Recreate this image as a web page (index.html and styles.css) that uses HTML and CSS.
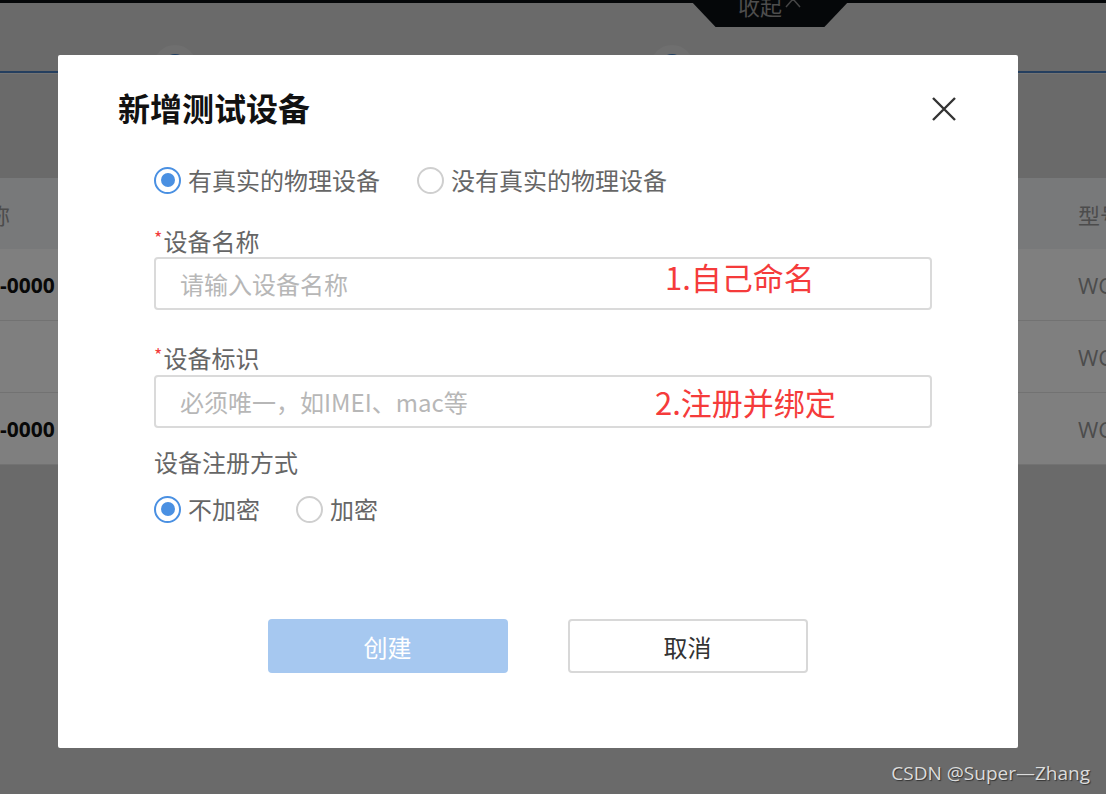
FILE: index.html
```html
<!DOCTYPE html>
<html lang="zh-CN">
<head>
<meta charset="utf-8">
<title>新增测试设备</title>
<link rel="stylesheet" href="styles.css">
</head>
<body>
<div class="page">
  <div class="topbar"></div>
  <div class="tab-wrap">
    <div class="tab"><span class="tab-text">收起</span><svg class="tab-chev" width="18" height="12" viewBox="0 0 18 12"><path d="M2 11 L9 3 L16 11" fill="none" stroke="#8a8a8a" stroke-width="1.5"/></svg></div>
  </div>
  <div class="steps">
    <div class="step-dot step-a"></div>
    <div class="step-dot step-b"></div>
  </div>
  <div class="steps-line"></div>
  <div class="table">
    <div class="trow thead"><span class="c-left c-head">称</span><span class="c-right c-gray">型号</span></div>
    <div class="trow"><span class="c-left c-bold">-0000</span><span class="c-right c-gray">WC</span></div>
    <div class="trow"><span class="c-left"></span><span class="c-right c-gray">WC</span></div>
    <div class="trow"><span class="c-left c-bold">-0000</span><span class="c-right c-gray">WC</span></div>
  </div>

  <div class="mask"></div>

  <div class="modal">
    <div class="modal-head">
      <h2 class="modal-title">新增测试设备</h2>
      <svg class="close" width="26" height="26" viewBox="0 0 26 26"><path d="M2 2 L24 24 M24 2 L2 24" stroke="#333" stroke-width="2.4" fill="none"/></svg>
    </div>
    <div class="form">
      <div class="radio-row row-type">
        <label class="radio"><span class="dot on"></span><span class="radio-text">有真实的物理设备</span></label>
        <label class="radio"><span class="dot"></span><span class="radio-text">没有真实的物理设备</span></label>
      </div>
      <div class="label lbl-1"><span class="req">*</span>设备名称</div>
      <div class="input"><span class="ph">请输入设备名称</span><span class="note note-1">1.自己命名</span></div>
      <div class="label lbl-2"><span class="req">*</span>设备标识</div>
      <div class="input"><span class="ph">必须唯一，如IMEI、mac等</span><span class="note note-2">2.注册并绑定</span></div>
      <div class="label lbl-3">设备注册方式</div>
      <div class="radio-row row-enc">
        <label class="radio"><span class="dot on"></span><span class="radio-text">不加密</span></label>
        <label class="radio"><span class="dot"></span><span class="radio-text">加密</span></label>
      </div>
    </div>
    <div class="actions">
      <button class="btn btn-primary">创建</button>
      <button class="btn btn-default">取消</button>
    </div>
  </div>

  <div class="watermark">CSDN @Super—Zhang</div>
</div>
</body>
</html>
```

FILE: styles.css
```css
* { box-sizing: border-box; }
html, body { margin: 0; padding: 0; }
body {
  width: 1106px;
  height: 794px;
  overflow: hidden;
  font-family: "Noto Sans CJK SC", "Noto Sans", sans-serif;
  background: #6a6a6a;
}
.page {
  position: relative;
  width: 1106px;
  height: 794px;
  background: #d4d4d4;
  overflow: hidden;
}
.topbar {
  height: 3px;
  background: #0b0e13;
}
.tab-wrap {
  height: 24px;
  position: relative;
}
.tab {
  position: absolute;
  left: 690px;
  top: -3px;
  width: 160px;
  height: 27px;
  background: #0b0e13;
  clip-path: polygon(0 0, 100% 0, 84% 100%, 16% 100%);
  display: flex;
  align-items: flex-start;
  justify-content: center;
  gap: 2px;
}
.tab-text {
  font-size: 22px;
  line-height: 22px;
  margin-top: -6px;
  color: #9a9a9a;
}
.tab-chev { margin-top: -4px; }
.steps {
  position: relative;
  height: 44px;
}
.step-dot {
  position: absolute;
  top: 18px;
  width: 44px;
  height: 44px;
  border-radius: 50%;
  background: #3c7ac0;
  border: 9px solid #dedede;
}
.step-a { left: 153px; }
.step-b { left: 650px; }
.steps-line {
  height: 3px;
  background: #4a7fbf;
  border-bottom: 1px solid #e8e8e8;
}
.table {
  margin-top: 104px;
  background: #fff;
}
.trow {
  height: 72px;
  display: flex;
  justify-content: space-between;
  align-items: center;
  border-bottom: 1px solid #e4e4e4;
  font-size: 22px;
  font-family: "Open Sans", "Noto Sans CJK SC", sans-serif;
}
.thead { height: 71px; background: #f0f2f5; border-bottom: none; }
.c-left { width: 80px; white-space: nowrap; }
.c-head { margin-left: -12px; color: #999; font-family: "Noto Sans CJK SC", sans-serif; }
.c-right { width: 28px; overflow: hidden; white-space: nowrap; }
.c-gray { color: #999; }
.c-bold { font-weight: 700; color: #111; font-size: 21px; margin-left: 0; }

.mask {
  position: absolute;
  inset: 0;
  background: rgba(0, 0, 0, 0.5);
}

.modal {
  position: absolute;
  left: 58px;
  top: 55px;
  width: 960px;
  height: 693px;
  background: #fff;
  border-radius: 2px;
  padding: 32px 0 0 0;
}
.modal-head {
  display: flex;
  align-items: center;
  justify-content: space-between;
  height: 40px;
  padding: 0 61px 0 60px;
}
.modal-title {
  margin: 0;
  font-size: 32px;
  line-height: 40px;
  font-weight: 700;
  color: #111;
}
.close { margin-top: 4px; }
.form {
  padding-left: 96px;
  width: 874px;
  display: flex;
  flex-direction: column;
}
.radio-row {
  display: flex;
  align-items: center;
  height: 36px;
}
.row-type { margin-top: 35px; gap: 37px; }
.row-enc { margin-top: 14px; gap: 36px; }
.radio {
  display: flex;
  align-items: center;
  gap: 7px;
  font-size: 24px;
  color: #666;
}
.dot {
  width: 27px;
  height: 27px;
  border-radius: 50%;
  border: 2px solid #cfcfcf;
  display: flex;
  align-items: center;
  justify-content: center;
}
.dot.on { border-color: #4a90e2; }
.dot.on::after {
  content: "";
  width: 14px;
  height: 14px;
  border-radius: 50%;
  background: #4a90e2;
}
.radio-text { line-height: 30px; }
.label {
  font-size: 24px;
  line-height: 30px;
  color: #666;
}
.req {
  color: #f23c3c;
  font-size: 18px;
  vertical-align: top;
  line-height: 22px;
  margin-right: 1px;
}
.lbl-1 { margin-top: 28px; }
.lbl-2 { margin-top: 33px; }
.lbl-3 { margin-top: 19px; }
.input {
  position: relative;
  margin-top: 1px;
  height: 53px;
  border: 2px solid #dadada;
  border-radius: 4px;
  display: flex;
  align-items: center;
  padding-left: 24px;
}
.lbl-2 + .input { margin-top: 2px; }
.ph {
  font-size: 24px;
  color: #b7b7b7;
}
.note {
  position: absolute;
  top: 50%;
  transform: translateY(-50%);
  color: #f53b3b;
  font-size: 31px;
  line-height: 40px;
}
.note-1 { left: 509px; margin-top: -7px; }
.note-2 { left: 499px; }
.actions {
  margin-top: 92px;
  display: flex;
  justify-content: center;
  gap: 60px;
  padding-right: 1px;
}
.btn {
  width: 240px;
  height: 54px;
  border-radius: 4px;
  font-family: "Noto Sans CJK SC", sans-serif;
  font-size: 24px;
  cursor: pointer;
}
.btn-primary {
  background: #a6c8f0;
  border: none;
  color: #fff;
}
.btn-default {
  background: #fff;
  border: 2px solid #d8d8d8;
  color: #333;
}
.watermark {
  position: absolute;
  right: 16px;
  bottom: 8px;
  font-family: "Open Sans", "DejaVu Sans", sans-serif;
  font-size: 19px;
  color: #dcdcdc;
  text-shadow: 1px 1px 1px #333;
}
```
